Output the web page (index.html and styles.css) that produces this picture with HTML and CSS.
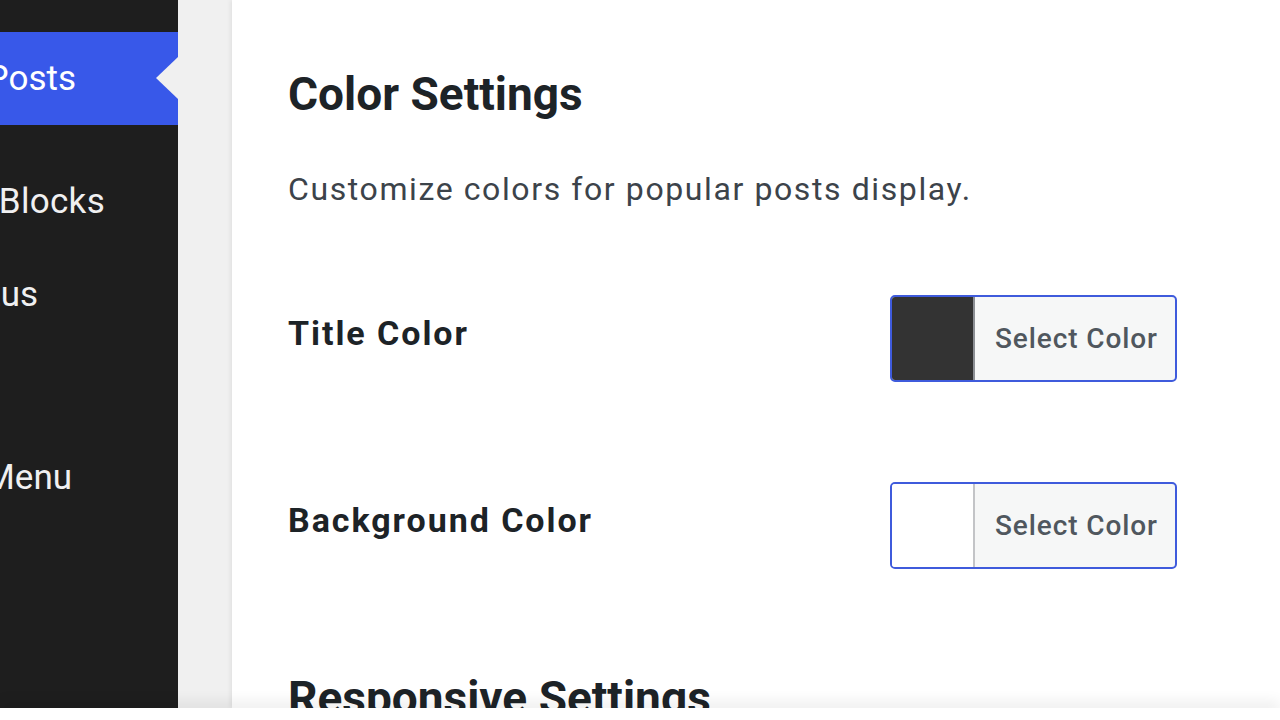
FILE: index.html
```html
<!DOCTYPE html>
<html lang="en">
<head>
<meta charset="utf-8">
<title>Color Settings</title>
<link rel="stylesheet" href="styles.css">
</head>
<body>
<div class="page">
  <nav class="sidebar">
    <div class="menu-item current"><span>Popular Posts</span><i class="pointer"></i></div>
    <div class="menu-item blocks"><span>Blocks</span></div>
    <div class="menu-item status"><span>Status</span></div>
    <div class="menu-item menu"><span>Collapse Menu</span></div>
  </nav>
  <div class="gutter"></div>
  <main class="content">
    <h2 class="section-title">Color Settings</h2>
    <p class="section-desc">Customize colors for popular posts display.</p>
    <div class="field-row">
      <label class="field-label">Title Color</label>
      <button class="color-btn"><span class="swatch dark"></span><span class="btn-text">Select Color</span></button>
    </div>
    <div class="field-row">
      <label class="field-label">Background Color</label>
      <button class="color-btn"><span class="swatch light"></span><span class="btn-text">Select Color</span></button>
    </div>
    <h2 class="section-title next">Responsive Settings</h2>
  </main>
</div>
<div class="browser-bar"></div>
</body>
</html>
```

FILE: styles.css
```css
html, body {
  margin: 0;
  padding: 0;
  height: 720px;
  overflow: hidden;
  background: #ffffff;
  font-family: Roboto, "Liberation Sans", sans-serif;
}

.page {
  display: flex;
  height: 708px;
  overflow: hidden;
}

.sidebar {
  width: 178px;
  flex: 0 0 178px;
  background: #1e1e1e;
  padding-top: 32px;
  display: flex;
  flex-direction: column;
  overflow: hidden;
  box-sizing: border-box;
}

.menu-item {
  position: relative;
  height: 93px;
  line-height: 93px;
  font-size: 35px;
  color: #f0f0f1;
  white-space: nowrap;
  display: flex;
  justify-content: flex-end;
}

.menu-item span {
  display: block;
}

.menu-item.current {
  background: #3858e9;
  color: #ffffff;
  padding-right: 102px;
}

.menu-item.blocks { margin-top: 30px; padding-right: 73px; letter-spacing: 0.3px; }
.menu-item.status { padding-right: 140px; }
.menu-item.menu { margin-top: 90px; padding-right: 106px; }

.pointer {
  position: absolute;
  right: 0;
  top: 25px;
  width: 0;
  height: 0;
  border-top: 21.5px solid transparent;
  border-bottom: 21.5px solid transparent;
  border-right: 22px solid #f0f0f0;
}

.gutter {
  width: 54px;
  flex: 0 0 54px;
  background: #f0f0f0;
}

.content {
  flex: 1;
  background: #ffffff;
  box-shadow: -2px 0 4px rgba(0, 0, 0, 0.06);
  padding: 66px 103px 0 56px;
  position: relative;
}

.section-title {
  margin: 0;
  font-size: 46px;
  line-height: 56px;
  font-weight: 700;
  color: #1d2327;
}

.section-title.next {
  margin-top: 101px;
}

.section-desc {
  margin: 47px 0 0;
  font-size: 32px;
  line-height: 40px;
  letter-spacing: 1.6px;
  color: #3c434a;
}

.field-row {
  display: flex;
  justify-content: space-between;
  align-items: flex-start;
  margin-top: 100px;
}

.section-desc + .field-row {
  margin-top: 86px;
}

.field-label {
  margin-top: 18px;
  font-size: 34px;
  line-height: 40px;
  letter-spacing: 1.95px;
  font-weight: 700;
  color: #1d2327;
}

.color-btn {
  display: flex;
  width: 287px;
  height: 87px;
  padding: 0;
  border: 2px solid #3f5bdc;
  border-radius: 5px;
  background: #f6f7f7;
  overflow: hidden;
  font-family: inherit;
  box-sizing: border-box;
}

.swatch {
  width: 83px;
  flex: 0 0 83px;
  height: 100%;
  border-right: 2px solid #c3c4c7;
  box-sizing: border-box;
}

.swatch.dark { background: #333333; border-right-color: #8c8f94; }
.swatch.light { background: #ffffff; }

.btn-text {
  flex: 1;
  padding-left: 20px;
  text-align: left;
  font-size: 28px;
  line-height: 83px;
  letter-spacing: 0.9px;
  font-weight: 500;
  color: #50575e;
}

.browser-bar {
  position: fixed;
  left: 0;
  right: 0;
  bottom: 0;
  height: 12px;
  background: #ffffff;
  box-shadow: 0 -6px 14px rgba(0, 0, 0, 0.08);
}
```
